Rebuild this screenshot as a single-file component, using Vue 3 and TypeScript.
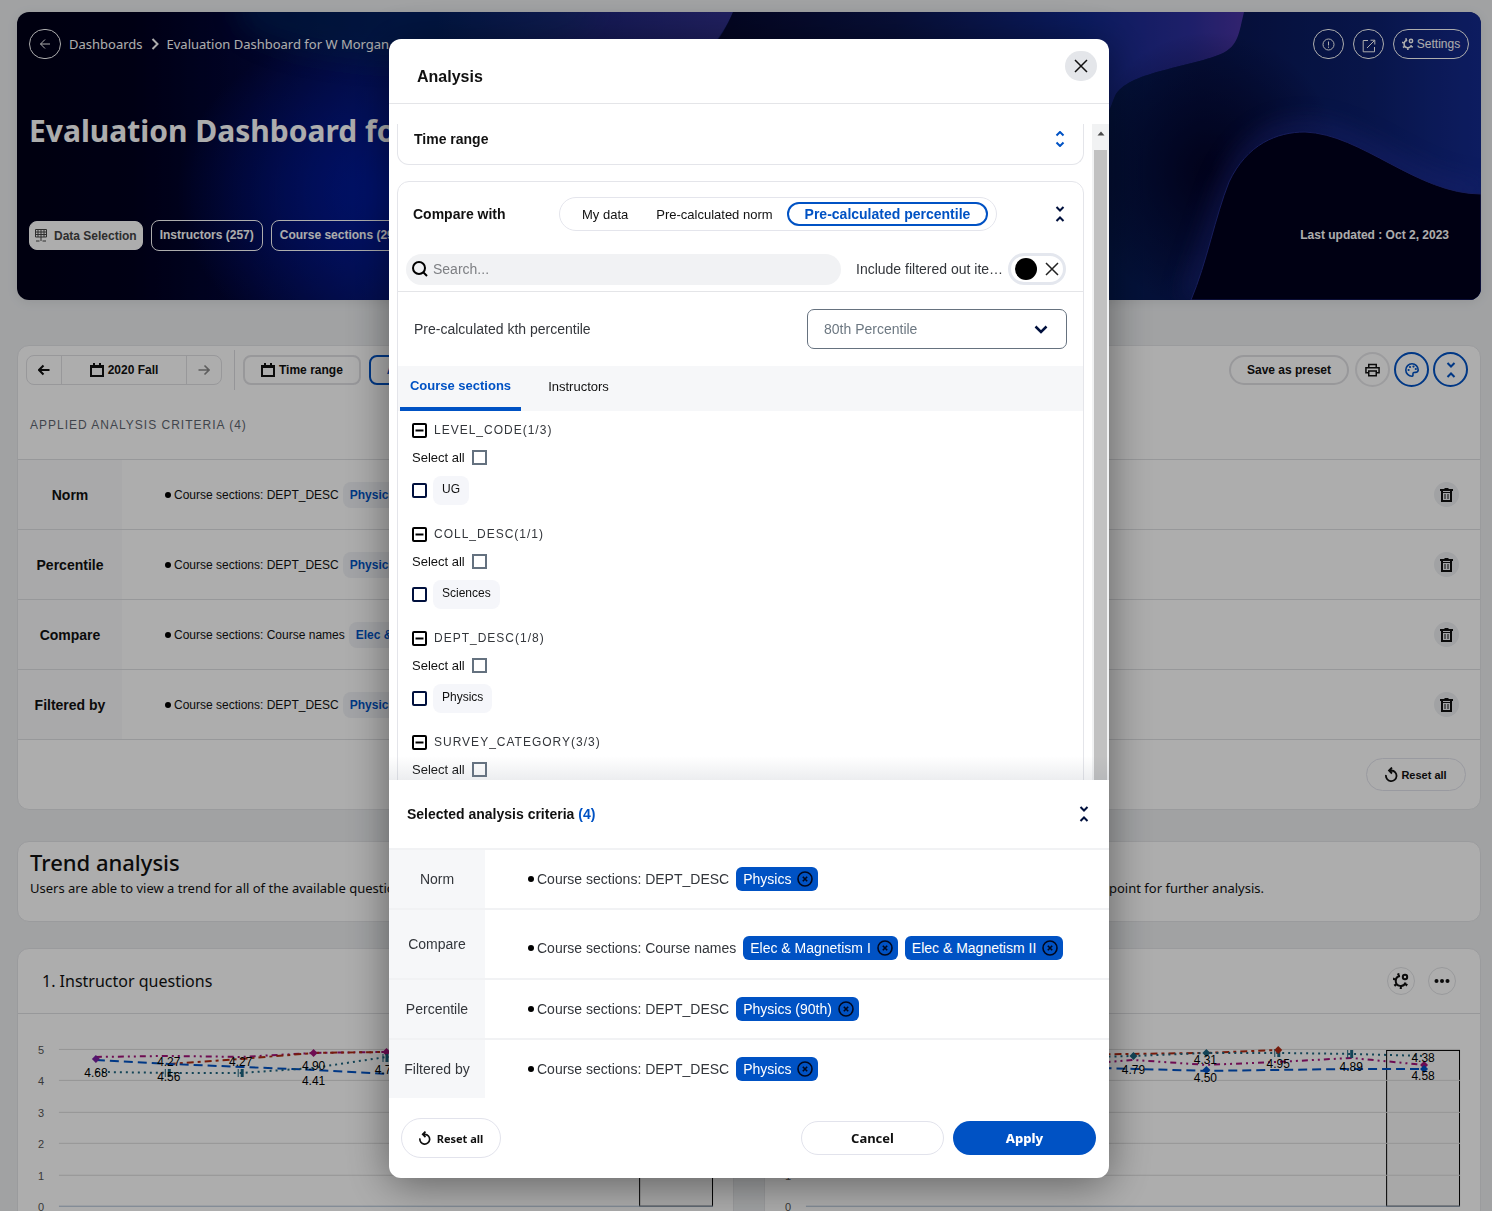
<script setup lang="ts">
import { ref } from 'vue'

interface Criterion {
  label: string
  field: string
  tags: string[]
}
interface Group {
  name: string
  items: string[]
}
interface Series {
  color: string
  dash: string
  points: string
}
interface ValueLabel {
  x: number
  y: number
  text: string
}
interface Marker {
  x: number
  y: number
  color: string
  shape: 'diamond' | 'bar'
}
interface Chart {
  title: string
  series: Series[]
  labels: ValueLabel[]
  markers: Marker[]
}

const applied: Criterion[] = [
  { label: 'Norm', field: 'DEPT_DESC', tags: ['Physics'] },
  { label: 'Percentile', field: 'DEPT_DESC', tags: ['Physics (90th)'] },
  { label: 'Compare', field: 'Course names', tags: ['Elec & Magnetism I', 'Elec & Magnetism II'] },
  { label: 'Filtered by', field: 'DEPT_DESC', tags: ['Physics'] },
]

const selected: Criterion[] = [
  { label: 'Norm', field: 'DEPT_DESC', tags: ['Physics'] },
  { label: 'Compare', field: 'Course names', tags: ['Elec & Magnetism I', 'Elec & Magnetism II'] },
  { label: 'Percentile', field: 'DEPT_DESC', tags: ['Physics (90th)'] },
  { label: 'Filtered by', field: 'DEPT_DESC', tags: ['Physics'] },
]

const groups: Group[] = [
  { name: 'LEVEL_CODE(1/3)', items: ['UG'] },
  { name: 'COLL_DESC(1/1)', items: ['Sciences'] },
  { name: 'DEPT_DESC(1/8)', items: ['Physics'] },
  { name: 'SURVEY_CATEGORY(3/3)', items: [] },
]

const modes = ['My data', 'Pre-calculated norm', 'Pre-calculated percentile']
const mode = ref(modes[2])
const tabs = ['Course sections', 'Instructors']
const tab = ref(tabs[0])
const includeFiltered = ref(false)

const blue = '#0052c4'
const teal = '#1d6580'
const plum = '#a3127a'
const rust = '#b02a12'

const charts: Chart[] = [
  {
    title: '1. Instructor questions',
    series: [
      { color: plum, dash: '6 4 2 4 2 4', points: '78,43 151,42 224,43 296,39 369,38 442,40' },
      { color: rust, dash: '7 4 3 4', points: '151,50 224,45 296,39 369,38 442,39' },
      { color: blue, dash: '9 5', points: '78,46 151,50 224,53 296,56 369,60 442,58' },
      { color: teal, dash: '2 4', points: '78,58 151,59 224,59 296,54 369,43 442,42' },
    ],
    labels: [
      { x: 78, y: 63, text: '4.68' },
      { x: 151, y: 52, text: '4.27' },
      { x: 151, y: 67, text: '4.56' },
      { x: 223, y: 52, text: '4.27' },
      { x: 296, y: 56, text: '4.90' },
      { x: 296, y: 71, text: '4.41' },
      { x: 369, y: 60, text: '4.79' },
    ],
    markers: [
      { x: 78, y: 45, color: '#7b1fa2', shape: 'diamond' },
      { x: 151, y: 59, color: teal, shape: 'bar' },
      { x: 224, y: 59, color: teal, shape: 'bar' },
      { x: 296, y: 39, color: plum, shape: 'diamond' },
      { x: 369, y: 38, color: plum, shape: 'diamond' },
      { x: 369, y: 44, color: teal, shape: 'bar' },
    ],
  },
  {
    title: '2. Course questions',
    series: [
      { color: rust, dash: '7 4 3 4', points: '296,41 369,40 442,39 514,36' },
      { color: plum, dash: '6 4 2 4 2 4', points: '296,49 344,48 369,46 442,51 514,48 587,44 660,51' },
      { color: blue, dash: '9 5', points: '296,53 369,55 442,57 514,56 587,55 660,55' },
      { color: teal, dash: '2 4', points: '296,44 369,42 442,39 514,39 587,40 660,42' },
    ],
    labels: [
      { x: 369, y: 60, text: '4.79' },
      { x: 441, y: 50, text: '4.31' },
      { x: 441, y: 68, text: '4.50' },
      { x: 514, y: 54, text: '4.95' },
      { x: 587, y: 57, text: '4.89' },
      { x: 659, y: 48, text: '4.38' },
      { x: 659, y: 66, text: '4.58' },
    ],
    markers: [
      { x: 369, y: 42, color: teal, shape: 'diamond' },
      { x: 442, y: 39, color: teal, shape: 'diamond' },
      { x: 442, y: 56, color: blue, shape: 'diamond' },
      { x: 514, y: 39, color: teal, shape: 'bar' },
      { x: 514, y: 36, color: rust, shape: 'diamond' },
      { x: 587, y: 40, color: teal, shape: 'bar' },
      { x: 660, y: 51, color: plum, shape: 'diamond' },
      { x: 660, y: 55, color: blue, shape: 'diamond' },
    ],
  },
]

const ticks = [5, 4, 3, 2, 1, 0].map((value, i) => ({ value, y: Math.round(36 + i * 31.4) - 0.5 }))
</script>

<template>
  <div class="page">
    <header class="banner">
      <svg class="art" viewBox="0 0 1464 288" preserveAspectRatio="none" aria-hidden="true">
        <defs>
          <linearGradient id="base" x1="0" y1="0" x2="1" y2="0">
            <stop offset="0" stop-color="#000018" />
            <stop offset="0.08" stop-color="#00001e" />
            <stop offset="0.16" stop-color="#02063a" />
            <stop offset="0.26" stop-color="#081564" />
            <stop offset="0.48" stop-color="#101f70" />
          </linearGradient>
          <radialGradient id="glow" cx="0.5" cy="0.5" r="0.5">
            <stop offset="0" stop-color="#001aa0" />
            <stop offset="0.5" stop-color="#001aa0" stop-opacity="0.55" />
            <stop offset="1" stop-color="#001aa0" stop-opacity="0" />
          </radialGradient>
          <linearGradient id="fade" x1="0" y1="0" x2="1" y2="0">
            <stop offset="0" stop-color="#3b3596" stop-opacity="0" />
            <stop offset="1" stop-color="#3b3596" stop-opacity="0.75" />
          </linearGradient>
          <linearGradient id="mid" x1="0" y1="0" x2="1" y2="0">
            <stop offset="0" stop-color="#05072e" />
            <stop offset="0.35" stop-color="#0b1650" />
            <stop offset="0.7" stop-color="#10288c" />
            <stop offset="0.9" stop-color="#2d2f9c" />
            <stop offset="1" stop-color="#4b34a4" />
          </linearGradient>
          <linearGradient id="right" x1="0" y1="0" x2="1" y2="0">
            <stop offset="0" stop-color="#03205a" />
            <stop offset="0.4" stop-color="#071650" />
            <stop offset="0.75" stop-color="#0c1f6c" />
            <stop offset="1" stop-color="#142a8e" />
          </linearGradient>
          <radialGradient id="shade" cx="0.5" cy="0.5" r="0.5">
            <stop offset="0" stop-color="#020225" stop-opacity="0.95" />
            <stop offset="1" stop-color="#020225" stop-opacity="0" />
          </radialGradient>
          <filter id="soft" x="-20%" y="-40%" width="140%" height="180%">
            <feGaussianBlur stdDeviation="12" />
          </filter>
        </defs>
        <rect width="1464" height="288" fill="url(#base)" />
        <ellipse cx="380" cy="180" rx="220" ry="170" fill="url(#glow)" />
        <ellipse cx="400" cy="0" rx="180" ry="50" fill="#04285c" opacity="0.6" filter="url(#soft)" />
        <path d="M420 0H716C708 18 700 28 690 40H420Z" fill="url(#fade)" />
        <path d="M716 0H1228C1222 20 1224 34 1204 42C1170 56 1110 60 1098 84C1092 100 1092 110 1080 120H690V40C704 26 710 14 716 0Z" fill="url(#mid)" />
        <path d="M1227 0H1464V288H1000V160C1100 110 1090 100 1098 84C1110 60 1170 56 1204 42C1222 34 1222 20 1227 0Z" fill="url(#right)" />
        <ellipse cx="1195" cy="160" rx="130" ry="140" fill="url(#shade)" />
        <path d="M1174 288C1190 250 1202 205 1215 172C1235 130 1262 118 1290 119C1345 122 1400 182 1464 181" fill="none" stroke="#2b35a4" stroke-width="18" opacity="0.55" filter="url(#soft)" />
        <path d="M1174 288C1190 250 1198 205 1212 170C1230 132 1260 120 1288 120C1345 122 1400 182 1464 182V288Z" fill="#00001c" stroke="#232c86" stroke-width="1" />
      </svg>

      <div class="banner-top">
        <nav class="crumbs" aria-label="Breadcrumb">
          <button class="round light" aria-label="Back">
            <svg width="12" height="12" viewBox="0 0 12 12"><path d="M11 6H1.500M6 1.500L1.500 6L6 10.500" /></svg>
          </button>
          <a href="#">Dashboards</a>
          <svg width="8" height="12" viewBox="0 0 8 12" class="thick"><path d="M1.500 1L6.500 6L1.500 11" /></svg>
          <a href="#">Evaluation Dashboard for W Morgan</a>
        </nav>
        <div class="banner-actions">
          <button class="round light" aria-label="Information">
            <svg width="13" height="13" viewBox="0 0 13 13"><circle cx="6.500" cy="6.500" r="5.500" /><path d="M6.500 3.500V7.500M6.500 8.600V9.800" /></svg>
          </button>
          <button class="round light low" aria-label="Open in new window">
            <svg width="14" height="14" viewBox="0 0 14 14"><path d="M6 1.500H1.200V12.800H12.500V8M8.500 1.200H12.800V5.500M12.500 1.500L5 9" /></svg>
          </button>
          <button class="round light wide">
            <svg width="12" height="12" viewBox="0 0 16 16" class="gear"><path d="M7 3A5 5 0 1 0 12.500 9.500" /><path class="teeth" d="M6.500 1.600A6.500 6.500 0 1 0 14 9.500" /><circle cx="12" cy="4" r="2.200" /></svg>
            Settings
          </button>
        </div>
      </div>

      <h1>Evaluation Dashboard for W Morgan</h1>

      <div class="banner-bottom">
        <button class="pill solid">
          <svg width="12" height="13" viewBox="0 0 12 13"><path d="M0.500 0.500H11.500V8H0.500ZM0.500 3H11.500M0.500 5.500H11.500M3 0.500V8M6 0.500V12M9 0.500V8M1 12H4.500M7.500 12H11" /></svg>
          Data Selection
        </button>
        <button class="pill">Instructors (257)</button>
        <button class="pill">Course sections (295)</button>
        <span class="updated">Last updated : Oct 2, 2023</span>
      </div>
    </header>

    <section class="card criteria">
      <div class="toolbar">
        <div class="stepper">
          <button aria-label="Previous term"><svg width="12" height="12" viewBox="0 0 12 12" class="thick"><path d="M11.500 6H1M5.500 1.500L1 6L5.500 10.500" /></svg></button>
          <button class="term">
            <svg width="14" height="14" viewBox="0 0 14 14" class="thick"><path d="M1 3H13V13H1ZM4 0V3M10 0V3M1 4H13" /></svg>
            2020 Fall
          </button>
          <button class="off" aria-label="Next term"><svg width="12" height="12" viewBox="0 0 12 12" class="medium"><path d="M0.500 6H11M6.500 1.500L11 6L6.500 10.500" /></svg></button>
        </div>
        <span class="rule"></span>
        <button class="tool">
          <svg width="14" height="14" viewBox="0 0 14 14" class="thick"><path d="M1 3H13V13H1ZM4 0V3M10 0V3M1 4H13" /></svg>
          Time range
        </button>
        <button class="tool active">Analysis</button>
        <div class="toolbar-end">
          <button class="tool save">Save as preset</button>
          <button class="disc" aria-label="Print">
            <svg width="15" height="14" viewBox="0 0 16 14" class="medium"><path d="M4 4V1H12V4M4 10H1V4.500H15V10H12M4 8H12V13H4Z" /></svg>
          </button>
          <button class="disc active" aria-label="Colours">
            <svg width="14" height="14" viewBox="0 0 14 14" class="medium"><path d="M7 0.800A6.200 6.200 0 1 0 7 13.200C8.800 13.200 7.300 10.800 8.300 9.800C9.500 8.600 13.200 10.600 13.200 7A6.200 6.200 0 0 0 7 0.800Z" /><g class="dots"><circle cx="3.600" cy="7" r="1.100" /><circle cx="5" cy="4" r="1.100" /><circle cx="8.500" cy="3.600" r="1.100" /><circle cx="10.800" cy="6" r="1.100" /></g></svg>
          </button>
          <button class="disc active" aria-label="Collapse">
            <svg width="10" height="16" viewBox="0 0 10 16" class="thick"><path d="M1.500 1L5 4.500L8.500 1M1.500 15L5 11.500L8.500 15" /></svg>
          </button>
        </div>
      </div>
      <h2 class="caps">APPLIED ANALYSIS CRITERIA (4)</h2>
      <table>
        <tbody>
          <tr v-for="row in applied" :key="row.label">
            <th scope="row">{{ row.label }}</th>
            <td>
              <div class="entry">
                <i class="bullet"></i>
                <span>Course sections: {{ row.field }}</span>
                <span v-for="tag in row.tags" :key="tag" class="soft-tag">{{ tag }}</span>
                <button class="bin" :aria-label="'Remove ' + row.label">
                  <svg width="13" height="14" viewBox="0 0 13 14"><path d="M0 2H13M4.500 1H8.500" /><path d="M2 3V13H11V3" /><path class="slats" d="M5 6V11M8 6V11M3 4.500H10" /></svg>
                </button>
              </div>
            </td>
          </tr>
        </tbody>
      </table>
      <div class="criteria-foot">
        <button class="reset small">
          <svg width="13" height="15" viewBox="0 0 13 15" class="thick"><path d="M1 8A5.300 5.300 0 1 0 6.500 3.500H4M7 0.500L4 3.500L7 6.500" /></svg>
          Reset all
        </button>
      </div>
    </section>

    <section class="card trend">
      <h2>Trend analysis</h2>
      <p>
        <span>Users are able to view a trend for all of the available questions.</span>
        <span>Click on a data point for further analysis.</span>
      </p>
    </section>

    <div class="charts">
      <section v-for="chart in charts" :key="chart.title" class="card chart">
        <header>
          <h3>{{ chart.title }}</h3>
          <button class="mini" aria-label="Chart settings">
            <svg width="16" height="16" viewBox="0 0 16 16" class="gear"><path d="M7 3A5 5 0 1 0 12.500 9.500" /><path class="teeth" d="M6.500 1.600A6.500 6.500 0 1 0 14 9.500" /><circle cx="12" cy="4" r="2.200" /></svg>
          </button>
          <button class="mini" aria-label="More">
            <svg width="16" height="6" viewBox="0 0 16 6" class="dots"><circle cx="2.500" cy="3" r="2" /><circle cx="8" cy="3" r="2" /><circle cx="13.500" cy="3" r="2" /></svg>
          </button>
        </header>
        <svg class="plot" viewBox="0 0 716 220" role="img" :aria-label="chart.title">
          <rect x="622.500" y="36.500" width="73" height="156" fill="#f8f8f8" stroke="#000" />
          <g v-for="t in ticks" :key="t.value">
            <line x1="41" x2="696" :y1="t.y" :y2="t.y" :stroke="t.value ? '#dcdcdc' : '#a9bcd2'" />
            <text x="23" :y="t.y + 5" class="axis">{{ t.value }}</text>
          </g>
          <polyline v-for="s in chart.series" :key="s.color" :points="s.points" :stroke="s.color" :stroke-dasharray="s.dash" fill="none" stroke-width="2" />
          <g v-for="(m, i) in chart.markers" :key="i" :fill="m.color">
            <path v-if="m.shape === 'diamond'" :d="`M${m.x - 4} ${m.y}L${m.x} ${m.y - 4}L${m.x + 4} ${m.y}L${m.x} ${m.y + 4}Z`" />
            <path v-else :d="`M${m.x - 4} ${m.y - 4}h1v8h-1ZM${m.x - 1} ${m.y - 4}h3v8h-3Z`" />
          </g>
          <text v-for="(l, i) in chart.labels" :key="'l' + i" :x="l.x" :y="l.y" class="value">{{ l.text }}</text>
        </svg>
      </section>
    </div>
  </div>

  <div class="scrim">
    <div class="modal" role="dialog" aria-modal="true" aria-labelledby="modal-title">
      <header class="modal-head">
        <h2 id="modal-title">Analysis</h2>
        <button class="close" aria-label="Close">
          <svg width="14" height="14" viewBox="0 0 14 14"><path d="M1 1L13 13M13 1L1 13" /></svg>
        </button>
      </header>

      <div class="scroll">
        <div class="scroll-body">
          <section class="panel clipped">
            <h3>Time range</h3>
            <button class="fold expand" aria-label="Expand">
              <svg width="10" height="16" viewBox="0 0 10 16"><path d="M1.500 4.500L5 1L8.500 4.500M1.500 11.500L5 15L8.500 11.500" /></svg>
            </button>
          </section>

          <section class="panel compare">
            <div class="compare-head">
              <h3>Compare with</h3>
              <div class="segments">
                <button v-for="m in modes" :key="m" :class="{ on: m === mode }" @click="mode = m">{{ m }}</button>
              </div>
              <button class="fold" aria-label="Collapse">
                <svg width="10" height="16" viewBox="0 0 10 16"><path d="M1.500 1L5 4.500L8.500 1M1.500 15L5 11.500L8.500 15" /></svg>
              </button>
            </div>

            <div class="search-row">
              <div class="search">
                <svg width="16" height="16" viewBox="0 0 16 16"><circle cx="7" cy="7" r="6" /><path d="M11.500 11.500L15 15" /></svg>
                <input type="text" placeholder="Search..." aria-label="Search" />
              </div>
              <label class="cut" for="include">Include filtered out items</label>
              <span class="switch">
                <input id="include" v-model="includeFiltered" type="checkbox" role="switch" />
                <svg width="14" height="14" viewBox="0 0 14 14"><path d="M1 1L13 13M13 1L1 13" /></svg>
              </span>
            </div>

            <div class="kth">
              <label for="kth">Pre-calculated kth percentile</label>
              <span class="select">
                <select id="kth">
                  <option>80th Percentile</option>
                </select>
                <svg width="14" height="9" viewBox="0 0 14 9"><path d="M1.500 1.500L7 7L12.500 1.500" /></svg>
              </span>
            </div>

            <div class="tabs" role="tablist">
              <button v-for="t in tabs" :key="t" role="tab" :aria-selected="t === tab" :class="{ on: t === tab }" @click="tab = t">{{ t }}</button>
            </div>

            <div class="groups">
              <div v-for="(g, gi) in groups" :key="g.name" class="group">
                <button class="group-name">
                  <svg width="15" height="15" viewBox="0 0 15 15"><rect x="1" y="1" width="13" height="13" rx="1" /><path d="M3.500 7.500H11.500" /></svg>
                  {{ g.name }}
                </button>
                <label class="all">Select all <input type="checkbox" class="grey" /></label>
                <div v-for="item in g.items" :key="item" class="item">
                  <input :id="'item' + gi" type="checkbox" />
                  <label :for="'item' + gi">{{ item }}</label>
                </div>
              </div>
            </div>
          </section>
        </div>
        <div class="bar" aria-hidden="true">
          <svg width="8" height="5" viewBox="0 0 8 5"><path d="M0.500 4.500L4 0.500L7.500 4.500Z" /></svg>
          <span class="thumb"></span>
        </div>
      </div>

      <section class="summary">
        <div class="summary-head">
          <h3>Selected analysis criteria <span>(4)</span></h3>
          <button class="fold" aria-label="Collapse">
            <svg width="10" height="16" viewBox="0 0 10 16"><path d="M1.500 1L5 4.500L8.500 1M1.500 15L5 11.500L8.500 15" /></svg>
          </button>
        </div>
        <table>
          <tbody>
            <tr v-for="row in selected" :key="row.label" :class="{ tall: row.tags.length > 1 }">
              <th scope="row">{{ row.label }}</th>
              <td>
                <div class="entry">
                  <i class="bullet"></i>
                  <span>Course sections: {{ row.field }}</span>
                  <span v-for="tag in row.tags" :key="tag" class="tag">
                    {{ tag }}
                    <button :aria-label="'Remove ' + tag">
                      <svg width="16" height="16" viewBox="0 0 16 16"><circle cx="8" cy="8" r="7" /><path d="M5.800 5.800L10.200 10.200M10.200 5.800L5.800 10.200" /></svg>
                    </button>
                  </span>
                </div>
              </td>
            </tr>
          </tbody>
        </table>
      </section>

      <footer class="modal-foot">
        <button class="reset">
          <svg width="12" height="14" viewBox="0 0 13 15"><path d="M1 8A5.300 5.300 0 1 0 6.500 3.500H4M7 0.500L4 3.500L7 6.500" /></svg>
          Reset all
        </button>
        <button class="cancel">Cancel</button>
        <button class="apply">Apply</button>
      </footer>
    </div>
  </div>
</template>

<style>
body {
  background: #edeff1;
}
</style>

<style scoped>
* {
  box-sizing: border-box;
}
h1,
h2,
h3,
p {
  margin: 0;
}
button {
  margin: 0;
  padding: 0;
  border: 0;
  background: none;
  font: inherit;
  color: inherit;
  display: inline-flex;
  align-items: center;
  justify-content: center;
  white-space: nowrap;
}
svg {
  flex: none;
  fill: none;
  stroke: currentColor;
}
.thick {
  stroke-width: 2;
}
.medium {
  stroke-width: 1.6;
}
.dots {
  fill: currentColor;
  stroke: none;
}
.gear {
  stroke-width: 2;
}
.gear .teeth {
  stroke-width: 3;
  stroke-dasharray: 2 4;
}
.page,
.scrim {
  font-family: 'Liberation Sans', Arial, sans-serif;
  font-size: 12px;
  color: #111;
}
.page {
  height: 100vh;
  overflow: hidden;
  padding: 12px 11px 0 17px;
  background: #edeff1;
}

/* banner */
.banner {
  position: relative;
  height: 288px;
  padding: 17px 12px;
  border-radius: 12px;
  overflow: hidden;
  display: flex;
  flex-direction: column;
  color: #fff;
  box-shadow: 0 2px 12px rgba(0, 0, 0, 0.08);
}
.art {
  position: absolute;
  inset: 0;
  width: 100%;
  height: 100%;
  stroke: none;
}
.banner > div,
.banner > h1 {
  position: relative;
}
.banner-top,
.crumbs,
.banner-actions,
.banner-bottom {
  display: flex;
  align-items: center;
}
.banner-top {
  justify-content: space-between;
}
.crumbs {
  gap: 8px;
  font: 13px 'Noto Sans', sans-serif;
}
.crumbs a {
  color: inherit;
  text-decoration: none;
}
.crumbs .round {
  width: 32px;
}
.round {
  width: 31px;
  height: 30px;
  border: 1px solid #fff;
  border-radius: 16px;
}
.round.low {
  padding-top: 4px;
}
.round.wide {
  width: 76px;
  gap: 3px;
}
.banner-actions {
  gap: 9px;
}
h1 {
  margin-top: 48px;
  font: 700 30px/48px 'Noto Sans', sans-serif;
  white-space: nowrap;
}
.banner-bottom {
  margin-top: 65px;
  gap: 8px;
  font-weight: 700;
}
.pill {
  height: 31px;
  padding: 0 8px 2px;
  border: 1px solid #fff;
  border-radius: 8px;
}
.pill.solid {
  height: 29px;
  padding: 0 5px;
  gap: 7px;
  background: #fff;
  color: #444;
}
.updated {
  margin-left: auto;
  padding: 0 20px 2px 0;
}

/* cards */
.card {
  background: #fff;
  border: 1px solid #e4e5e8;
  border-radius: 12px;
}
.criteria {
  margin-top: 45px;
}
.toolbar {
  display: flex;
  align-items: center;
  height: 47px;
  padding: 0 12px 0 8px;
  gap: 8px;
  font-weight: 700;
}
.stepper {
  display: flex;
  height: 30px;
  border: 1px solid #e0e0e4;
  border-radius: 8px;
}
.stepper button {
  width: 34px;
}
.stepper .term {
  width: 126px;
  gap: 4px;
  border: solid #e0e0e4;
  border-width: 0 1px;
}
.stepper .off {
  color: #8b8b8b;
}
.rule {
  width: 1px;
  height: 40px;
  margin: 0 0 0 4px;
  background: #dcdce0;
}
.tool {
  height: 30px;
  padding: 0 16px;
  gap: 4px;
  border: 2px solid #e0e0e4;
  border-radius: 8px;
}
.tool.active,
.disc.active {
  border-color: #0052c4;
  color: #0052c4;
}
.toolbar-end {
  display: flex;
  align-items: center;
  margin-left: auto;
  gap: 4px;
}
.save {
  width: 120px;
  margin-right: 2px;
  border-radius: 15px;
}
.disc {
  width: 35px;
  height: 35px;
  border: 2px solid #e6e6e9;
  border-radius: 50%;
}
.caps {
  height: 66px;
  padding: 23px 12px 0;
  font-size: 12px;
  font-weight: 400;
  line-height: 18px;
  letter-spacing: 1px;
  color: #5f6670;
}
table {
  width: 100%;
  border-collapse: collapse;
}
.criteria tr {
  height: 70px;
  border: solid #dfe0e3;
  border-width: 1px 0;
}
th {
  padding: 0;
}
td {
  padding: 0;
}
.criteria th {
  width: 104px;
  background: #f9f9fb;
  font-size: 14px;
}
.entry {
  display: flex;
  align-items: center;
  padding-left: 43px;
  white-space: nowrap;
}
.bullet {
  width: 6px;
  height: 6px;
  margin-right: 3px;
  border-radius: 50%;
  background: #000;
}
.soft-tag {
  margin-left: 4px;
  padding: 0 7px;
  line-height: 26px;
  border-radius: 8px;
  background: #f0f2f6;
  color: #0052c4;
  font-weight: 700;
}
.bin {
  width: 25px;
  height: 25px;
  margin: 0 21px 0 auto;
  border-radius: 50%;
  background: #edeff2;
}
.bin svg {
  stroke-width: 2;
}
.bin .slats {
  stroke-width: 1;
}
.criteria-foot {
  display: flex;
  justify-content: flex-end;
  align-items: center;
  height: 69px;
  padding-right: 14px;
}
.reset {
  width: 100px;
  height: 40px;
  gap: 6px;
  border: 1px solid #e2e3ec;
  border-radius: 20px;
  font: 700 11px 'Noto Sans', sans-serif;
}
.reset svg {
  stroke-width: 1.8;
}
.reset.small {
  height: 33px;
  gap: 3px;
  font-family: 'Liberation Sans', Arial, sans-serif;
}
.trend {
  height: 81px;
  margin-top: 31px;
  padding: 4px 12px;
  font-family: 'Noto Sans', sans-serif;
}
.trend h2 {
  font-size: 22px;
  font-weight: 500;
  line-height: 32px;
}
.trend p {
  display: flex;
  justify-content: space-between;
  padding-right: 204px;
  font-size: 13px;
  line-height: 20px;
}
.charts {
  display: grid;
  grid-template-columns: 1fr 1fr;
  gap: 30px;
  margin-top: 26px;
}
.chart header {
  display: flex;
  align-items: center;
  height: 65px;
  padding: 0 24px;
  gap: 13px;
  border-bottom: 1px solid #dfe0e3;
}
.chart h3 {
  margin-right: auto;
  font: 400 16px 'Noto Sans', sans-serif;
}
.mini {
  width: 28px;
  height: 28px;
  border: 1px solid #e2e3e6;
  border-radius: 50%;
}
.plot {
  display: block;
  width: 100%;
  stroke: none;
}
.axis {
  font-size: 11px;
  fill: #555;
  text-anchor: middle;
}
.value {
  font-size: 12px;
  fill: #000;
  text-anchor: middle;
}

/* modal */
.scrim {
  position: fixed;
  inset: 0;
  display: flex;
  justify-content: center;
  padding: 39px 8px 33px 14px;
  background: rgba(0, 0, 0, 0.32);
}
.modal {
  display: flex;
  flex-direction: column;
  width: 720px;
  max-width: 100%;
  border-radius: 12px;
  background: #fff;
  overflow: hidden;
  box-shadow: 0 6px 44px rgba(0, 0, 0, 0.45);
}
.modal-head {
  display: flex;
  justify-content: space-between;
  flex: none;
  height: 65px;
  padding: 12px 12px 0 28px;
  border-bottom: 1px solid #e4e5e8;
}
.modal-head h2 {
  margin-top: 15px;
  font-size: 16px;
  line-height: 22px;
}
.close {
  width: 32px;
  height: 30px;
  border-radius: 16px;
  background: #e4e6ea;
}
.close svg,
.switch svg {
  stroke-width: 1.5;
}
h3 {
  font-size: 14px;
  line-height: 20px;
}
.scroll {
  position: relative;
  display: flex;
  flex: 1;
  min-height: 0;
  margin-top: 20px;
  overflow: hidden;
}
.scroll::after {
  content: '';
  position: absolute;
  left: 0;
  right: 0;
  bottom: 0;
  height: 24px;
  background: linear-gradient(rgba(120, 130, 145, 0), rgba(120, 130, 145, 0.14));
}
.scroll-body {
  flex: 1;
  padding: 0 8px;
}
.panel {
  border: 1px solid #e4e5ea;
  border-radius: 12px;
}
.clipped {
  display: flex;
  align-items: center;
  justify-content: space-between;
  height: 41px;
  padding: 0 18px 10px 16px;
  border-top: 0;
  border-radius: 0 0 12px 12px;
}
.fold {
  color: #00103d;
}
.fold svg {
  stroke-width: 2;
}
.fold.expand {
  color: #0052c4;
}
.compare {
  margin-top: 16px;
}
.compare-head {
  display: flex;
  align-items: center;
  padding: 15px 18px 0 15px;
}
.compare-head .fold {
  margin-left: auto;
}
.compare-head h3 {
  width: 146px;
}
.segments {
  display: flex;
  align-items: center;
  height: 34px;
  padding: 0 8px;
  border: 1px solid #e4e5ec;
  border-radius: 17px;
  font-size: 13px;
}
.segments button {
  height: 24px;
  padding: 0 14px;
  border: 0 solid #0052c4;
  border-radius: 12px;
}
.segments .on {
  padding: 0 16px;
  border-width: 2px;
  font-size: 14px;
  font-weight: 700;
  color: #0052c4;
}
.search-row {
  display: flex;
  align-items: center;
  height: 60px;
  margin-top: 1px;
  padding: 15px 17px 0 8px;
  border-bottom: 1px solid #e4e5e8;
  font-size: 14px;
}
.search-row,
.kth {
  color: #33363b;
}
.search {
  display: flex;
  align-items: center;
  flex: 1;
  height: 31px;
  padding: 0 6px;
  gap: 5px;
  border-radius: 16px;
  background: #f1f2f4;
  color: #000;
}
.search svg {
  stroke-width: 2;
}
.search input {
  flex: 1;
  padding: 0;
  border: 0;
  outline: 0;
  background: none;
  font: 14px 'Liberation Sans', Arial, sans-serif;
}
.search input::placeholder {
  color: #7d7f83;
}
.cut {
  width: 150px;
  margin: 0 2px 0 15px;
  overflow: hidden;
  text-overflow: ellipsis;
  white-space: nowrap;
}
.switch {
  display: flex;
  align-items: center;
  gap: 8px;
  width: 58px;
  height: 32px;
  padding-left: 4px;
  border: 3px solid #e4e7ee;
  border-radius: 16px;
  color: #222;
}
.switch input {
  appearance: none;
  width: 22px;
  height: 22px;
  margin: 0;
  border-radius: 50%;
  background: #000;
}
.kth {
  display: flex;
  align-items: center;
  justify-content: space-between;
  height: 74px;
  padding: 0 16px;
  font-size: 14px;
}
.select {
  position: relative;
  width: 260px;
}
.select select {
  appearance: none;
  width: 100%;
  height: 40px;
  padding: 0 16px;
  border: 1px solid #66727f;
  border-radius: 7px;
  background: #fff;
  font: 14px 'Liberation Sans', Arial, sans-serif;
  color: #6d7882;
}
.select svg {
  position: absolute;
  right: 19px;
  top: 16px;
  color: #00103d;
  stroke-width: 2.5;
}
.tabs {
  display: flex;
  height: 45px;
  padding-left: 2px;
  background: #f6f7f9;
  font-size: 13px;
}
.tabs button {
  width: 115px;
  border: solid transparent;
  border-width: 0 0 4px;
}
.tabs .on {
  width: 121px;
  padding-bottom: 2px;
  border-color: #0052c4;
  font-weight: 700;
  color: #0052c4;
}
.groups {
  padding: 8px 14px 0;
}
.group {
  height: 104px;
}
.group-name {
  height: 22px;
  gap: 7px;
  letter-spacing: 1px;
  color: #33363b;
}
.group-name svg {
  color: #000;
  stroke-width: 2;
}
.all {
  display: flex;
  align-items: center;
  height: 32px;
  gap: 7px;
  font-size: 13px;
}
.groups input {
  appearance: none;
  flex: none;
  width: 15px;
  height: 15px;
  margin: 0;
  border: 2px solid #00103d;
  border-radius: 2px;
}
.groups .grey {
  border-color: #64717f;
  border-radius: 0;
}
.item {
  display: flex;
  align-items: center;
  gap: 6px;
  margin-top: 3px;
}
.item label {
  height: 29px;
  padding: 0 9px;
  border-radius: 8px;
  background: #f5f6fa;
  line-height: 26px;
}
.bar {
  display: flex;
  flex-direction: column;
  align-items: center;
  width: 17px;
  padding: 7px 1px 0;
  background: #f1f2f3;
}
.bar svg {
  fill: #4a4a4a;
  stroke: none;
}
.thumb {
  flex: 1;
  width: 13px;
  margin-top: 14px;
  background: #c1c1c1;
}
.summary-head {
  display: flex;
  align-items: center;
  justify-content: space-between;
  height: 68px;
  padding: 0 20px 0 18px;
}
.summary-head span {
  color: #0052c4;
}
.summary tr {
  height: 60px;
  border-top: 2px solid #f1f2f4;
}
.summary .tall {
  height: 70px;
}
.summary tr:last-child {
  height: 59px;
}
.summary .tall .entry {
  padding-top: 8px;
}
.summary th {
  width: 96px;
  background: #f6f7f9;
  font-size: 14px;
  font-weight: 400;
  color: #33363b;
}
.summary td {
  font-size: 14px;
  color: #33363b;
}
.tag {
  display: inline-flex;
  align-items: center;
  height: 24px;
  margin-left: 7px;
  padding: 0 5px 0 7px;
  gap: 6px;
  border-radius: 6px;
  background: #0052c4;
  color: #fff;
}
.tag button {
  color: #00081f;
}
.tag svg {
  stroke-width: 1.6;
}
.modal-foot {
  display: flex;
  align-items: center;
  flex: none;
  height: 80px;
  padding: 0 13px 0 12px;
  font: 700 13px 'Noto Sans', sans-serif;
}
.cancel,
.apply {
  width: 143px;
  height: 34px;
  border-radius: 17px;
}
.cancel {
  margin: 0 9px 0 auto;
  border: 1px solid #e2e3ec;
}
.apply {
  background: #0052c4;
  color: #fff;
  font-weight: 800;
}
</style>
